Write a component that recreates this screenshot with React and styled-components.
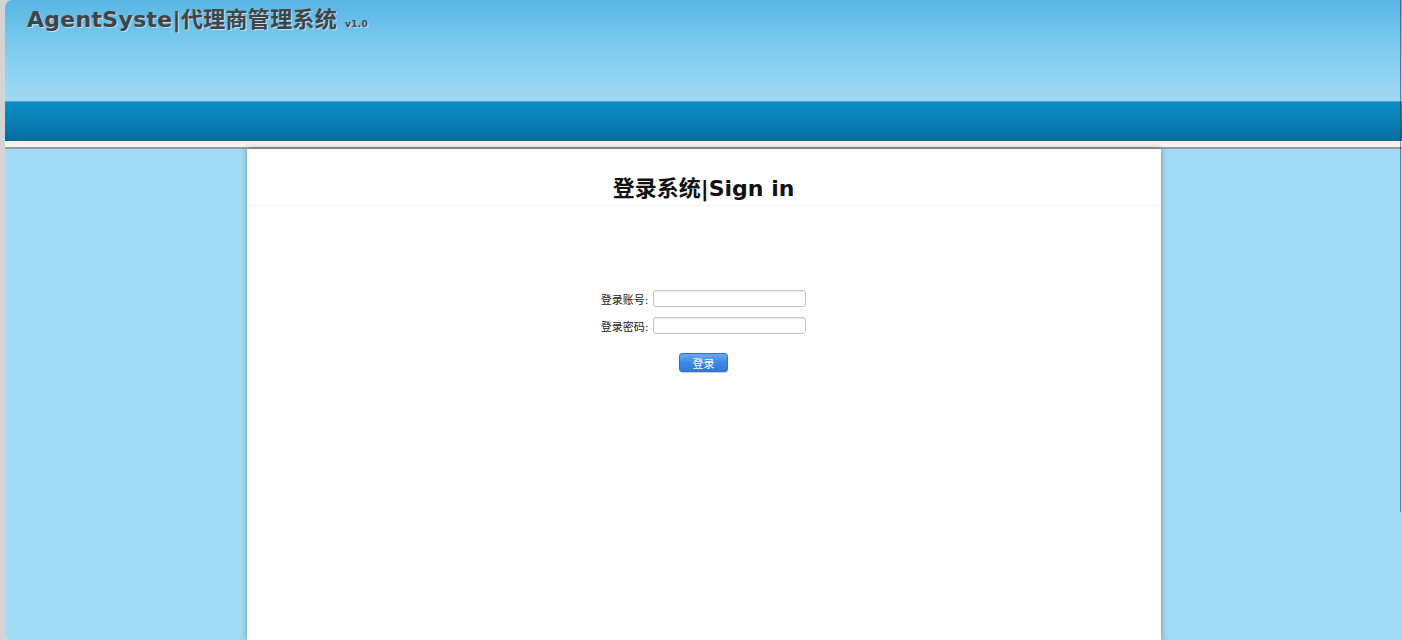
import React from 'react'
import styled, { createGlobalStyle } from 'styled-components'

const GlobalStyle = createGlobalStyle`
  html, body {
    margin: 0;
    padding: 0;
    height: 100%;
    overflow: hidden;
  }
  body {
    background: linear-gradient(to right, #d4d4d4, #ececec);
    font-family: "DejaVu Sans", Verdana, "Noto Sans CJK SC", sans-serif;
  }
  #root {
    height: 100%;
  }
`

const Window = styled.div`
  position: relative;
  margin-left: 5px;
  height: 640px;
  border-radius: 8px 0 0 8px;
  overflow: hidden;
  background: #a1daf4;
  display: flex;
  flex-direction: column;
`

const Header = styled.div`
  height: 101px;
  background: linear-gradient(to bottom, #59b6e4 0%, #7ccaee 45%, #a1daf4 100%);
  padding: 1px 0 0 22px;
  box-sizing: border-box;
`

const Brand = styled.h1`
  margin: 0;
  font-size: 22px;
  font-weight: bold;
  color: #434343;
  text-shadow: 1px 1px 0 rgba(255, 255, 255, 0.55);
  letter-spacing: 0.3px;
  display: flex;
  align-items: baseline;
  gap: 8px;
`

const Version = styled.span`
  font-size: 9px;
  font-weight: bold;
  color: #444;
`

const NavBar = styled.div`
  height: 40px;
  background: linear-gradient(to bottom, #0b8fc4 0%, #0980b6 50%, #066a9b 100%);
  border-top: 1px solid #4aaad6;
  box-sizing: border-box;
`

const Strip = styled.div`
  height: 6px;
  background: #f5f4f1;
  border-bottom: 2px solid #9a9a9a;
`

const Body = styled.div`
  flex: 1;
  display: flex;
  justify-content: center;
`

const Card = styled.div`
  width: 914px;
  background: #fff;
  box-shadow: 0 0 6px rgba(0, 0, 0, 0.35);
  display: flex;
  flex-direction: column;
  align-items: center;
`

const CardTitle = styled.h2`
  align-self: stretch;
  margin: 0;
  padding: 21px 0 3px;
  text-align: center;
  font-size: 22px;
  font-weight: bold;
  color: #111;
  border-bottom: 1px solid #f0f0f0;
`

const Form = styled.form`
  margin-top: 84px;
  display: flex;
  flex-direction: column;
  align-items: center;
  gap: 10px;
`

const Row = styled.label`
  display: flex;
  align-items: center;
  font-size: 11px;
  color: #222;
`

const Input = styled.input`
  width: 153px;
  height: 17px;
  box-sizing: border-box;
  margin-left: 5px;
  border: 1px solid #c4c4c4;
  border-radius: 3px;
  box-shadow: inset 0 1px 1px rgba(0, 0, 0, 0.08);
  background: #fff;
  font-size: 11px;
`

const Button = styled.button`
  margin-top: 9px;
  width: 49px;
  height: 19px;
  padding: 0;
  border: 1px solid #2f73c9;
  border-radius: 3px;
  background: linear-gradient(to bottom, #6aa8f0 0%, #3f89e6 50%, #2d79dc 100%);
  color: #fff;
  font-size: 11px;
  font-family: "DejaVu Sans", "Noto Sans CJK SC", sans-serif;
  box-shadow: 0 1px 1px rgba(0, 0, 0, 0.2);
`

const ScrollEdge = styled.div`
  position: absolute;
  top: 0;
  right: 1px;
  width: 1px;
  height: 512px;
  background: rgba(30, 60, 80, 0.55);
`

export default function App() {
  return (
    <>
      <GlobalStyle />
      <Window>
        <Header>
          <Brand>
            AgentSyste|代理商管理系统
            <Version>v1.0</Version>
          </Brand>
        </Header>
        <NavBar />
        <Strip />
        <Body>
          <Card>
            <CardTitle>登录系统|Sign in</CardTitle>
            <Form onSubmit={e => e.preventDefault()}>
              <Row>
                登录账号:
                <Input type="text" />
              </Row>
              <Row>
                登录密码:
                <Input type="password" />
              </Row>
              <Button type="submit">登录</Button>
            </Form>
          </Card>
        </Body>
        <ScrollEdge />
      </Window>
    </>
  )
}
